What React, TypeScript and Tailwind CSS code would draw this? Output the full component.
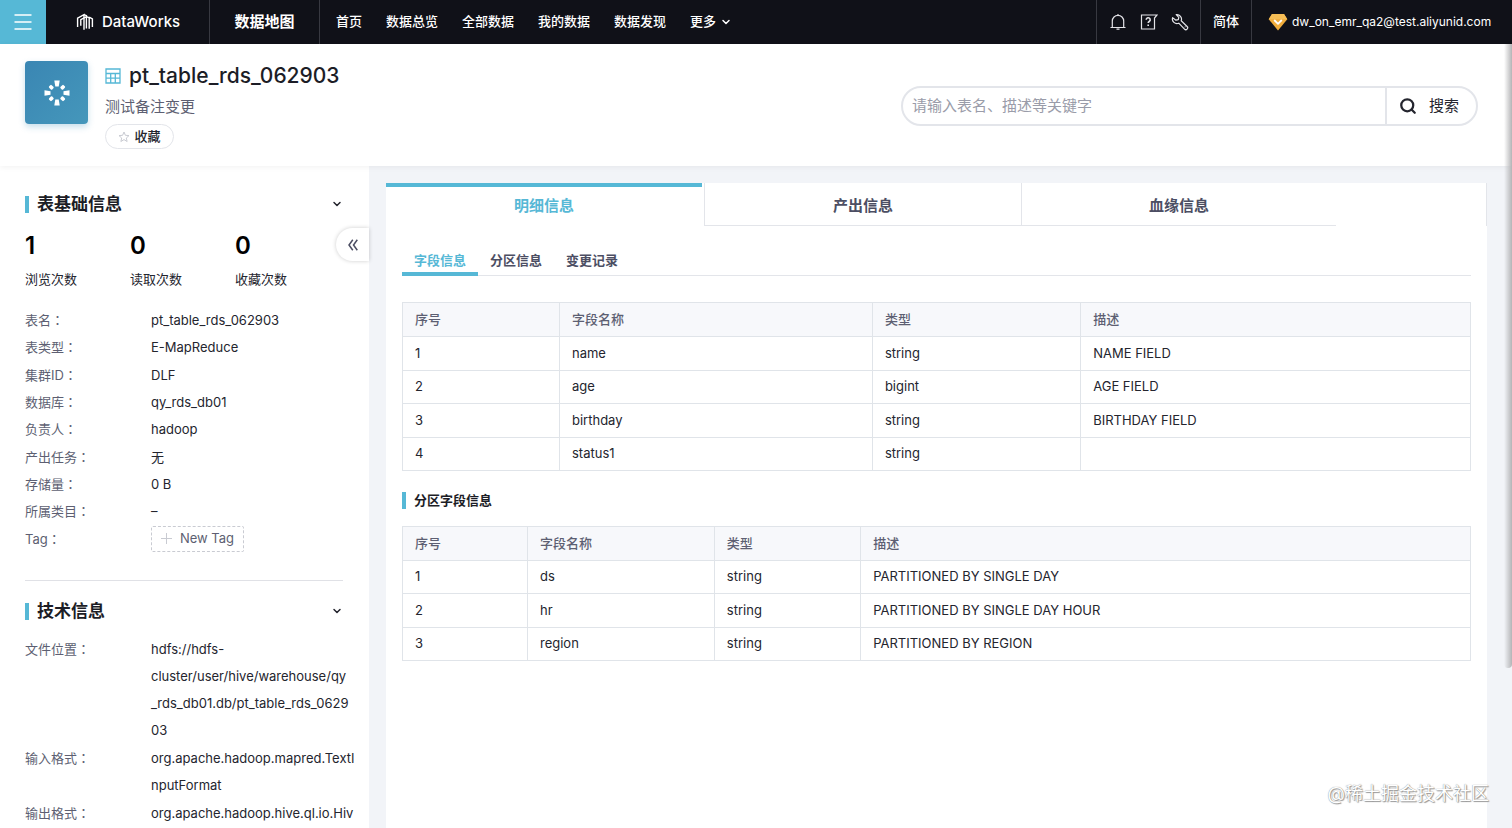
import React from 'react';
import { ChevronDown, Search } from 'lucide-react';

interface Column {
  title: string;
  width: string;
}

const NAV_ITEMS = ['首页', '数据总览', '全部数据', '我的数据', '数据发现'];

const STATS = [
  { value: 1, label: '浏览次数' },
  { value: 0, label: '读取次数' },
  { value: 0, label: '收藏次数' },
];

const BASE_INFO = [
  { label: '表名', value: 'pt_table_rds_062903' },
  { label: '表类型', value: 'E-MapReduce' },
  { label: '集群ID', value: 'DLF' },
  { label: '数据库', value: 'qy_rds_db01' },
  { label: '负责人', value: 'hadoop' },
  { label: '产出任务', value: '无' },
  { label: '存储量', value: '0 B' },
  { label: '所属类目', value: '–' },
];

// 长路径没有自然断点，按列宽手动换行
const TECH_INFO = [
  { label: '文件位置', value: 'hdfs://hdfs-\ncluster/user/hive/warehouse/qy\n_rds_db01.db/pt_table_rds_0629\n03' },
  { label: '输入格式', value: 'org.apache.hadoop.mapred.TextI\nnputFormat' },
  { label: '输出格式', value: 'org.apache.hadoop.hive.ql.io.Hiv' },
];

const FIELD_COLUMNS: Column[] = [
  { title: '序号', width: 'w-[14.7%]' },
  { title: '字段名称', width: 'w-[29.3%]' },
  { title: '类型', width: 'w-[19.5%]' },
  { title: '描述', width: 'w-[36.5%]' },
];

const FIELD_ROWS = [
  ['1', 'name', 'string', 'NAME FIELD'],
  ['2', 'age', 'bigint', 'AGE FIELD'],
  ['3', 'birthday', 'string', 'BIRTHDAY FIELD'],
  ['4', 'status1', 'string', ''],
];

const PARTITION_COLUMNS: Column[] = [
  { title: '序号', width: 'w-[11.7%]' },
  { title: '字段名称', width: 'w-[17.5%]' },
  { title: '类型', width: 'w-[13.7%]' },
  { title: '描述', width: 'w-[57.1%]' },
];

const PARTITION_ROWS = [
  ['1', 'ds', 'string', 'PARTITIONED BY SINGLE DAY'],
  ['2', 'hr', 'string', 'PARTITIONED BY SINGLE DAY HOUR'],
  ['3', 'region', 'string', 'PARTITIONED BY REGION'],
];

const LogoIcon = () => (
  <svg width="18" height="18" viewBox="0 0 18 18" fill="none" stroke="#fff" strokeWidth="1.4">
    <path d="M1.6 14V5.2L8 1.6v15.2" />
    <path d="M4.8 12.8V6.6l5.6-3v11.8" />
    <path d="M8 1.6l3 1.2M10.4 3.6l2.8 1.2v11M13.2 4.2l3.2 1.8V14" />
  </svg>
);

const BellIcon = () => (
  <svg width="18" height="18" viewBox="0 0 18 18" fill="none" stroke="#e4e4e8" strokeWidth="1.2">
    <path d="M3.3 14.5V8a5.7 5.7 0 0 1 11.4 0v6.5M1.5 14.5h15M9 2.3V1M7.5 16.2h3" />
  </svg>
);

const HelpIcon = () => (
  <svg width="18" height="18" viewBox="0 0 18 18" fill="none" stroke="#e4e4e8" strokeWidth="1.2">
    <path d="M17 2H1.5v14h13V5z" />
    <path d="M6.2 6.8a2 2 0 1 1 3 1.7c-.8.5-1 .8-1 1.6M8.2 11.6v1.5" strokeWidth="1.6" />
  </svg>
);

const WrenchIcon = () => (
  <svg width="18" height="18" viewBox="0 0 18 18" fill="none" stroke="#e4e4e8" strokeWidth="1.2" strokeLinejoin="round">
    <path d="M5.2 1.6l2.6 2.7-.5 2.4-2.4.5L1.6 4.6a4.6 4.6 0 0 0 6.2 5.6l5.7 5.9a1.8 1.8 0 0 0 2.6-2.6L10.2 7.8a4.6 4.6 0 0 0-5-6.2z" />
    <path d="M13.8 13.6l.6.6" />
  </svg>
);

const GemIcon = () => (
  <svg width="20" height="18" viewBox="0 0 20 18">
    <path d="M4 1h12l3.3 5.2L10 17.5.7 6.2z" fill="#f0ad3c" />
    <path d="M4 1h12l3.3 5.2H.7z" fill="#f5bd55" />
    <path d="M6.2 7l3.8 3.8L13.8 7" fill="none" stroke="#fff" strokeWidth="1.8" />
  </svg>
);

const TableIcon = () => (
  <svg width="16" height="16" viewBox="0 0 16 16" fill="none" stroke="#56b8d6" strokeWidth="1.3">
    <path d="M1 1h14v14H1zM1 5.5h14M1 10.2h14M5.7 5.5V15M10.3 5.5V15" />
  </svg>
);

// 八段式的加载图标
const SpinnerIcon = () => (
  <svg width="26" height="26" viewBox="0 0 26 26" fill="#fff">
    {[0, 90, 180, 270].map(r => (
      <path key={r} d="M10.3.5h5.4l-1 6h-3.4z" transform={`rotate(${r} 13 13)`} />
    ))}
    {[45, 135, 225, 315].map(r => (
      <rect key={r} x="11.2" y="2.7" width="3.6" height="4.4" rx="1" transform={`rotate(${r} 13 13)`} />
    ))}
  </svg>
);

const StarIcon = () => (
  <svg width="12" height="12" viewBox="0 0 12 12" fill="none" stroke="#c9cbd2">
    <path d="M6 1l1.4 3.3 3.6.3-2.7 2.4.8 3.5L6 8.6l-3.1 1.9.8-3.5L1 4.6l3.6-.3z" />
  </svg>
);

const CollapseIcon = () => (
  <svg width="12" height="12" viewBox="0 0 12 12" fill="none" stroke="#4c4e63" strokeWidth="1.5">
    <path d="M5.8.8L2 6l3.8 5.2M10.3.8L6.5 6l3.8 5.2" />
  </svg>
);

const SectionTitle = ({ title }: { title: string }) => (
  <div className="flex items-center">
    <span className="w-1 h-[17px] bg-[#56b8d6]" />
    <h2 className="ml-2 flex-1 text-[17px] leading-6 font-bold text-[#1c1d26]">{title}</h2>
    <button type="button" aria-label={title} className="w-3">
      <ChevronDown size={12} strokeWidth={3} />
    </button>
  </div>
);

const InfoRow = ({ label, children }: { label: string; children: React.ReactNode }) => (
  <div className="flex">
    <dt className="w-[126px] shrink-0 leading-[25px] text-[#5d5f72]">
      {label}
      <span className="font-['Noto_Sans_CJK_JP']">：</span>
    </dt>
    <dd className="flex-1 min-w-0 whitespace-pre">{children}</dd>
  </div>
);

const DataTable = ({ columns, rows, height }: { columns: Column[]; rows: string[][]; height: string }) => (
  <table className={`w-full table-fixed border-collapse text-left ${height}`}>
    <thead>
      <tr className="bg-[#f7f8fb]">
        {columns.map(c => (
          <th key={c.title} className={`h-[34px] border border-[#e0e4e9] px-3 py-0 font-medium text-[#5d5f72] ${c.width}`}>
            {c.title}
          </th>
        ))}
      </tr>
    </thead>
    <tbody>
      {rows.map(row => (
        <tr key={row[0]}>
          {row.map((cell, i) => (
            <td key={i} className="border border-[#e0e4e9] px-3 py-0">{cell}</td>
          ))}
        </tr>
      ))}
    </tbody>
  </table>
);

const TopBar = () => (
  <header className="flex h-11 shrink-0 items-stretch bg-[#101118] text-[13px] text-white">
    <button type="button" aria-label="菜单" className="flex w-[46px] items-center justify-center bg-[#56b8d6]">
      <svg width="18" height="16" viewBox="0 0 18 16" stroke="#fff" strokeWidth="1.6">
        <path d="M.5 1h17M.5 8h17M.5 15h17" />
      </svg>
    </button>
    <div className="flex w-[164px] items-center gap-2 border-r border-[#383941] pl-[30px] text-[15px] font-medium">
      <LogoIcon />
      DataWorks
    </div>
    <div className="flex w-[110px] items-center justify-center border-r border-[#383941] text-[15px] font-bold">数据地图</div>
    <nav className="flex flex-1 items-center gap-6 pl-4 font-medium">
      {NAV_ITEMS.map(n => (
        <a key={n} href="#">{n}</a>
      ))}
      <a href="#" className="flex items-center gap-1">
        更多
        <ChevronDown size={12} strokeWidth={3} />
      </a>
    </nav>
    <div className="flex w-[105px] items-center justify-center gap-[13px] border-x border-[#383941]">
      <button type="button" aria-label="通知"><BellIcon /></button>
      <button type="button" aria-label="帮助"><HelpIcon /></button>
      <button type="button" aria-label="工具"><WrenchIcon /></button>
    </div>
    <button type="button" className="w-[51px] border-r border-[#383941] font-medium">简体</button>
    <div className="flex w-[260px] items-center gap-1 pl-4 text-xs">
      <GemIcon />
      dw_on_emr_qa2@test.aliyunid.com
    </div>
  </header>
);

const TitleBar = () => (
  <section className="relative z-10 flex h-[122px] shrink-0 items-start bg-white pl-[25px] pr-[34px] pt-[17px] shadow-[0_1px_6px_rgba(0,0,0,0.06)]">
    <div className="flex size-[63px] items-center justify-center rounded-sm bg-linear-to-br from-[#3a86b3] to-[#4597bb] shadow-[0_3px_6px_rgba(70,150,190,0.3)]">
      <SpinnerIcon />
    </div>
    <div className="ml-[17px] flex-1">
      <div className="flex items-center gap-2">
        <TableIcon />
        <h1 className="text-[21px] leading-[30px] font-medium text-[#1c1d26]">pt_table_rds_062903</h1>
      </div>
      <p className="mt-1 text-[15px] leading-6 text-[#5d5f72]">测试备注变更</p>
      <button type="button" className="mt-[5px] flex h-[25px] w-[69px] items-center justify-center gap-1 rounded-full border border-[#e3e5ea] text-[13px] font-medium">
        <StarIcon />
        收藏
      </button>
    </div>
    <form className="mt-[25px] flex h-10 w-[577px] items-stretch rounded-full border-2 border-[#e3e5ea] text-[15px]">
      <input
        type="text"
        aria-label="搜索"
        placeholder="请输入表名、描述等关键字"
        className="min-w-0 flex-1 rounded-l-full bg-transparent pl-[9px] outline-none placeholder:text-[#9a9ca9]"
      />
      <button type="button" className="flex w-[91px] items-center gap-3 border-l-2 border-[#e3e5ea] pl-3">
        <Search size={18} strokeWidth={3} />
        搜索
      </button>
    </form>
  </section>
);

const Sidebar = () => (
  <aside className="relative w-[369px] shrink-0 bg-white pl-[25px] pr-[26px] pt-[26px]">
    <SectionTitle title="表基础信息" />
    <div className="mt-3 flex">
      {STATS.map(s => (
        <div key={s.label} className="w-[105px]">
          <div className="text-2xl leading-9 font-semibold text-black">{s.value}</div>
          <div className="mt-[5px] leading-5">{s.label}</div>
        </div>
      ))}
    </div>
    <dl className="mt-[18px] grid h-[246px] auto-rows-fr leading-[27px]">
      {BASE_INFO.map(i => (
        <InfoRow key={i.label} label={i.label}>{i.value}</InfoRow>
      ))}
      <InfoRow label="Tag">
        <button type="button" className="flex h-[26px] w-[93px] items-center justify-center gap-2 rounded-xs border border-dashed border-[#c9cbd2] text-[#5d5f72]">
          <svg width="11" height="11" viewBox="0 0 11 11" stroke="#c9cbd2">
            <path d="M5.5 0v11M0 5.5h11" />
          </svg>
          New Tag
        </button>
      </InfoRow>
    </dl>
    <hr className="mt-[27px] mb-[18px] border-[#e0e1e6]" />
    <SectionTitle title="技术信息" />
    <dl className="mt-[13px] flex flex-col gap-px leading-[27px]">
      {TECH_INFO.map(i => (
        <InfoRow key={i.label} label={i.label}>{i.value}</InfoRow>
      ))}
    </dl>
    <button
      type="button"
      aria-label="收起"
      className="absolute right-0 top-[62px] flex h-[33px] w-[33px] items-center justify-center rounded-l-full bg-white shadow-[0_0_4px_rgba(0,0,0,0.2)]"
    >
      <CollapseIcon />
    </button>
  </aside>
);

const Detail = () => (
  <main className="ml-[17px] mr-[25px] mt-[17px] flex-1 bg-white">
    <div className="flex h-[43px] border-r border-[#e3e5ea] text-[15px] font-bold text-[#4c4e63]">
      <button type="button" className="mr-0.5 w-[316px] border-t-4 border-[#56b8d6] text-[#56b8d6]">明细信息</button>
      <button type="button" className="w-[317px] border-b border-l border-[#e3e5ea] pt-1">产出信息</button>
      <button type="button" className="w-[315px] border-b border-l border-[#e3e5ea] pt-1">血缘信息</button>
    </div>
    <div className="px-4">
      <div className="mt-4 flex h-[34px] border-b border-[#e3e5ea] font-bold text-[#4c4e63]">
        <button type="button" className="-mb-px w-[76px] border-b-4 border-[#56b8d6] pt-2 text-[#56b8d6]">字段信息</button>
        <button type="button" className="w-[76px] pt-1">分区信息</button>
        <button type="button" className="w-[76px] pt-1">变更记录</button>
      </div>
      <div className="mt-[26px]">
        <DataTable columns={FIELD_COLUMNS} rows={FIELD_ROWS} height="h-[169px]" />
      </div>
      <div className="mt-[19px] mb-4 flex items-center">
        <span className="w-1 h-[17px] bg-[#56b8d6]" />
        <h3 className="ml-2 leading-5 font-bold text-[#1c1d26]">分区字段信息</h3>
      </div>
      <DataTable columns={PARTITION_COLUMNS} rows={PARTITION_ROWS} height="h-[135px]" />
    </div>
  </main>
);

export default function App() {
  return (
    <div className="relative flex h-screen flex-col overflow-hidden bg-[#f2f4f8] font-[Inter,'Noto_Sans_CJK_SC',sans-serif] text-[13px] text-[#24252e]">
      <TopBar />
      <TitleBar />
      <div className="flex min-h-0 flex-1">
        <Sidebar />
        <Detail />
      </div>
      <div className="absolute right-0 top-11 z-20 h-[624px] w-2 rounded-b bg-linear-to-r from-transparent to-[#b4b4b6]" />
      <div className="absolute bottom-5 right-[23px] z-20 text-[18px] leading-7 text-white [text-shadow:0_0_1px_#777,1px_1px_1px_#999]">
        @稀土掘金技术社区
      </div>
    </div>
  );
}
